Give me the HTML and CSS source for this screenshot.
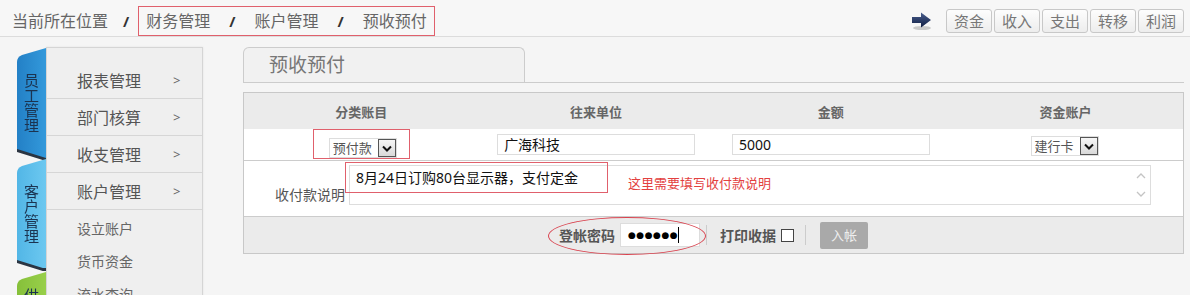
FILE: index.html
```html
<!DOCTYPE html>
<html>
<head>
  <meta charset="utf-8">
  <title>预收预付</title>
  <link rel="stylesheet" href="styles.css">
</head>
<body>
<div class="topbar">
  <div class="crumbs">
    <span class="crumbs__home">当前所在位置</span>
    <span class="crumbs__sep crumbs__sep_first">/</span>
    <div class="crumbs__mark">
      <span>财务管理</span>
      <span class="crumbs__sep">/</span>
      <span>账户管理</span>
      <span class="crumbs__sep">/</span>
      <span>预收预付</span>
    </div>
  </div>
  <div class="quick">
    <svg class="quick__arrow" width="24" height="20" viewBox="0 0 24 20">
      <defs>
        <linearGradient id="arr" x1="0" y1="0" x2="0" y2="1">
          <stop offset="0" stop-color="#4a5f8e"/>
          <stop offset="1" stop-color="#0f1c42"/>
        </linearGradient>
      </defs>
      <ellipse cx="12" cy="17" rx="9" ry="2" fill="#c9c9c9"/>
      <path d="M2 6 H11 V1.5 L21 9 L11 16.5 V12 H2 Z" fill="url(#arr)"/>
    </svg>
    <a class="quick__btn" href="#">资金</a>
    <a class="quick__btn" href="#">收入</a>
    <a class="quick__btn" href="#">支出</a>
    <a class="quick__btn" href="#">转移</a>
    <a class="quick__btn" href="#">利润</a>
  </div>
</div>

<div class="main">
  <div class="side">
    <div class="side__tabs">
      <div class="side__wrap">
        <div class="side__tab side__tab_blue">员工管理</div>
      </div>
      <div class="side__wrap side__wrap_second">
        <div class="side__tab side__tab_sky">客户管理</div>
      </div>
      <div class="side__wrap side__wrap_third">
        <div class="side__tab side__tab_green">供应管理</div>
      </div>
    </div>
    <div class="side__menu">
      <div class="side__item"><span class="side__label">报表管理</span><span class="side__more">&gt;</span></div>
      <div class="side__item"><span class="side__label">部门核算</span><span class="side__more">&gt;</span></div>
      <div class="side__item"><span class="side__label">收支管理</span><span class="side__more">&gt;</span></div>
      <div class="side__item"><span class="side__label">账户管理</span><span class="side__more">&gt;</span></div>
      <div class="side__subs">
        <div class="side__sub">设立账户</div>
        <div class="side__sub">货币资金</div>
        <div class="side__sub">流水查询</div>
      </div>
    </div>
  </div>

  <div class="content">
    <div class="content__head">
      <div class="content__tab">预收预付</div>
    </div>
    <div class="form">
      <div class="form__row form__row_head">
        <div class="form__cell">分类账目</div>
        <div class="form__cell">往来单位</div>
        <div class="form__cell">金额</div>
        <div class="form__cell">资金账户</div>
      </div>
      <div class="form__row form__row_fields">
        <div class="form__cell form__cell_top">
          <div class="mark">
            <div class="pick">
              <span class="pick__text">预付款</span>
              <span class="pick__btn">
                <svg width="10" height="7" viewBox="0 0 10 7"><path d="M1 1.5 L5 5.5 L9 1.5" fill="none" stroke="#111" stroke-width="2"/></svg>
              </span>
            </div>
          </div>
        </div>
        <div class="form__cell"><div class="field">广海科技</div></div>
        <div class="form__cell"><div class="field">5000</div></div>
        <div class="form__cell">
          <div class="pick pick_bank">
            <span class="pick__text">建行卡</span>
            <span class="pick__btn">
              <svg width="10" height="7" viewBox="0 0 10 7"><path d="M1 1.5 L5 5.5 L9 1.5" fill="none" stroke="#111" stroke-width="2"/></svg>
            </span>
          </div>
        </div>
      </div>
      <div class="form__memo">
        <span class="form__label">收付款说明</span>
        <div class="form__text">
          <span class="form__value">8月24日订购80台显示器，支付定金</span>
          <span class="form__note">这里需要填写收付款说明</span>
          <span class="form__mark"></span>
          <svg class="form__scroll" width="12" height="30" viewBox="0 0 12 30">
            <path d="M2 8 L6 4 L10 8" fill="none" stroke="#c4c4c4" stroke-width="1.3"/>
            <path d="M2 22 L6 26 L10 22" fill="none" stroke="#c4c4c4" stroke-width="1.3"/>
          </svg>
        </div>
      </div>
      <div class="form__foot">
        <div class="pwd">
          <span class="pwd__label">登帐密码</span>
          <div class="pwd__input">
            <span class="pwd__dots">●●●●●●</span>
            <span class="pwd__caret"></span>
          </div>
          <span class="pwd__ring"></span>
        </div>
        <span class="foot__sep"></span>
        <label class="print">打印收据 <span class="print__box"></span></label>
        <span class="foot__sep foot__sep_second"></span>
        <a class="post" href="#">入帐</a>
      </div>
    </div>
  </div>
</div>
</body>
</html>
```

FILE: styles.css
```css
body {
    margin: 0;
    height: 295px;
    overflow: hidden;
    background: #f5f5f5;
    font-family: "Noto Sans", "Noto Sans CJK SC", sans-serif;
    color: #555;
  }
a {
    text-decoration: none;
  }

/* верхняя полоса */
.topbar {
    display: flex;
    justify-content: space-between;
    align-items: center;
    height: 31px;
    padding: 5px 6px 0 12px;
    border-bottom: 1px solid #dcdcdc;
    background: #f7f7f7;
  }
.crumbs {
    display: flex;
    align-items: center;
    font-size: 16px;
    line-height: 20px;
    color: #666;
  }
.crumbs__sep {
    margin: 0 19px;
    font-size: 15px;
    font-weight: bold;
    color: #333;
  }
.crumbs__sep_first {
    margin: 0 9px 0 15px;
  }
.crumbs__mark {
    display: flex;
    align-items: center;
    height: 28px;
    padding: 0 7px;
    border: 1px solid #e0606c;
  }
.quick {
    display: flex;
    align-items: center;
    gap: 2px;
  }
.quick__arrow {
    margin-right: 10px;
  }
.quick__btn {
    display: block;
    height: 22px;
    line-height: 22px;
    padding: 0 7px;
    border: 1px solid #c8c8c8;
    border-radius: 3px;
    background: linear-gradient(#fdfdfd, #ededed);
    font-size: 15px;
    color: #777;
  }

/* боковое меню */
.main {
    display: flex;
    padding-top: 10px;
  }
.side {
    display: flex;
    margin-left: 17px;
  }
.side__tabs {
    width: 29px;
    padding-top: 1px;
  }
.side__wrap {
    filter: drop-shadow(0 3px 0 #2b3542);
  }
.side__wrap_second {
    margin-top: 1px;
  }
.side__wrap_third {
    margin-top: 4px;
  }
.side__tab {
    box-sizing: border-box;
    height: 110px;
    padding: 25px 6px 0;
    clip-path: path("M0 14 Q0 9 5 7 L29 0 L29 110 L0 101 Z");
    font-size: 15px;
    line-height: 15px;
    text-align: center;
    word-break: break-all;
    color: #1b3350;
  }
.side__tab_blue {
    background: linear-gradient(90deg, #2380c6, #3399db);
  }
.side__tab_sky {
    height: 109px;
    background: linear-gradient(90deg, #52b6e6, #6cc8f0);
  }
.side__tab_green {
    padding-top: 16px;
    background: linear-gradient(90deg, #86c03a, #98cf4a);
  }
.side__menu {
    width: 155px;
    padding-top: 14px;
    border: 1px solid #d5d5d5;
    background: #efefef;
    box-shadow: 0 0 2px rgba(0, 0, 0, 0.08);
  }
.side__item {
    display: flex;
    align-items: center;
    height: 36px;
    padding-left: 30px;
    border-bottom: 1px solid #d6d6d6;
    font-size: 16px;
    color: #555;
  }
.side__label {
    width: 96px;
  }
.side__more {
    font-size: 13px;
    color: #666;
  }
.side__subs {
    padding-top: 2px;
  }
.side__sub {
    height: 33px;
    line-height: 33px;
    padding-left: 30px;
    font-size: 14px;
    color: #666;
  }

/* контент */
.content {
    width: 941px;
    margin-left: 40px;
  }
.content__head {
    display: flex;
    border-bottom: 1px solid #ccc;
  }
.content__tab {
    width: 255px;
    height: 34px;
    line-height: 34px;
    padding-left: 25px;
    border: 1px solid #ccc;
    border-bottom: 0;
    border-radius: 6px 6px 0 0;
    background: #f1f1f1;
    font-size: 19px;
    color: #777;
  }
.form {
    margin-top: 9px;
    border: 1px solid #c8c8c8;
    background: #fff;
  }
.form__row {
    display: grid;
    grid-template-columns: repeat(4, 1fr);
  }
.form__row_head {
    height: 36px;
    background: #ebebeb;
    font-size: 13px;
    font-weight: bold;
    color: #666;
  }
.form__row_fields {
    height: 31px;
  }
.form__cell {
    display: flex;
    justify-content: center;
    align-items: center;
  }
.form__cell_top {
    align-items: flex-start;
  }
.mark {
    padding: 8px 12px 0 15px;
    border: 1px solid #e0606c;
  }
.pick {
    display: flex;
    align-items: center;
    height: 18px;
    border: 1px solid #ddd;
    background: #fff;
    font-size: 13px;
    line-height: 18px;
    color: #555;
  }
.pick_bank {
    margin-top: 3px;
    margin-left: -2px;
  }
.pick__text {
    padding: 0 6px 0 3px;
  }
.pick__btn {
    display: flex;
    justify-content: center;
    align-items: center;
    width: 16px;
    height: 16px;
    border: 1px solid #555;
    background: linear-gradient(#f6f6f6, #d9d9d9);
  }
.field {
    box-sizing: border-box;
    width: 198px;
    height: 21px;
    padding-left: 6px;
    border: 1px solid #ddd;
    background: #fff;
    font-size: 14px;
    line-height: 19px;
    color: #111;
  }
.form__memo {
    display: flex;
    align-items: flex-start;
    height: 51px;
    padding: 4px 0 0 31px;
    border-top: 1px solid #ccc;
  }
.form__label {
    margin: 20px 4px 0 0;
    font-size: 14px;
    line-height: 20px;
    color: #555;
  }
.form__text {
    position: relative;
    display: flex;
    align-items: flex-start;
    width: 800px;
    height: 38px;
    border: 1px solid #ddd;
  }
.form__value {
    padding: 2px 0 0 6px;
    font-size: 14px;
    line-height: 20px;
    color: #111;
  }
.form__note {
    margin-left: 50px;
    padding-top: 7px;
    font-size: 13px;
    line-height: 20px;
    color: #e3413f;
  }
.form__mark {
    position: absolute;
    left: -5px;
    top: -4px;
    width: 261px;
    height: 29px;
    border: 1px solid #e0606c;
  }
.form__scroll {
    position: absolute;
    right: 3px;
    top: 4px;
  }
.form__foot {
    display: flex;
    justify-content: center;
    align-items: center;
    height: 36px;
    border-top: 1px solid #ccc;
    background: #ebebeb;
  }
.pwd {
    position: relative;
    display: flex;
    align-items: center;
    gap: 5px;
  }
.pwd__label {
    font-size: 14px;
    font-weight: bold;
    color: #555;
  }
.pwd__input {
    display: flex;
    align-items: center;
    width: 71px;
    height: 22px;
    padding-left: 7px;
    border: 1px solid #ddd;
    background: #fff;
  }
.pwd__dots {
    font-family: "DejaVu Sans", sans-serif;
    font-size: 9px;
    letter-spacing: 0.5px;
    color: #000;
  }
.pwd__caret {
    width: 1px;
    height: 16px;
    background: #000;
  }
.pwd__ring {
    position: absolute;
    left: -11px;
    right: -6px;
    top: -6px;
    bottom: -8px;
    border: 1px solid #d9434f;
    border-radius: 50%;
  }
.foot__sep {
    width: 1px;
    height: 20px;
    margin: 0 13px 0 6px;
    background: #ccc;
  }
.foot__sep_second {
    margin: 0 14px 0 11px;
  }
.print {
    display: flex;
    align-items: center;
    gap: 5px;
    font-size: 14px;
    font-weight: bold;
    color: #555;
  }
.print__box {
    width: 11px;
    height: 11px;
    border: 1px solid #444;
    background: #fff;
  }
.post {
    width: 48px;
    height: 27px;
    line-height: 27px;
    border-radius: 2px;
    background: #a9a9a9;
    text-align: center;
    font-size: 13px;
    color: #eee;
  }
```
